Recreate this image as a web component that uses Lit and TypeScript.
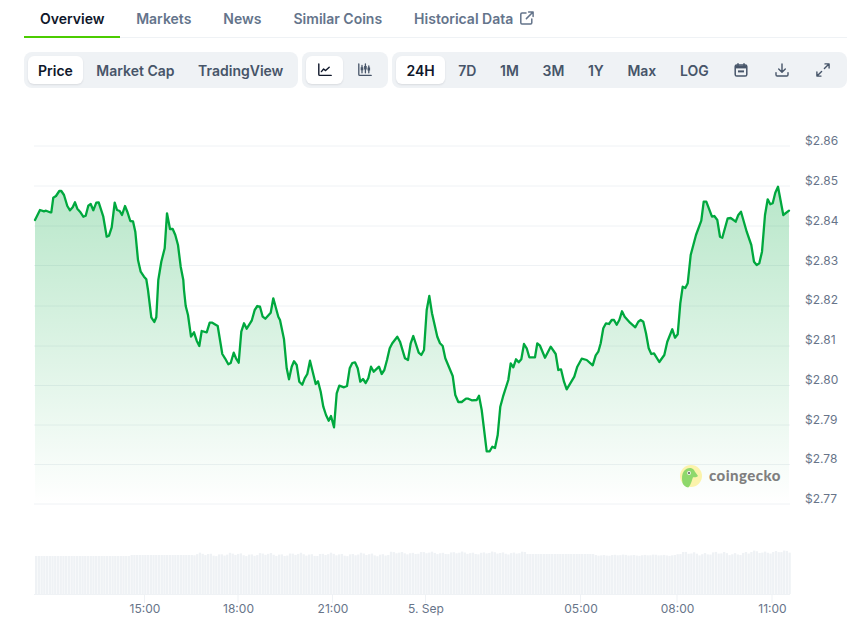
import { LitElement, html, css, svg } from "lit";
import { customElement } from "lit/decorators.js";

const LINE: [number, number][] = [
[35,220],[40,210],[44,211.3],[46,210.7],[50,212.3],[51.3,212.3],[53.3,197.7],[56,196],[59.3,191],[61.3,191],[64,195],[67.3,206],[70,210.3],[72.7,207.3],[75,202.3],[77.3,208.7],[80,211.7],[83.3,216.7],[85.7,215.7],[88.3,205.7],[90.7,204],[93.3,210.3],[96.3,202.7],[98.7,202.3],[103.3,216.7],[106.7,236.7],[109,235.7],[111.7,227.3],[114.7,202.7],[117,210],[119.7,211],[122,215],[125,206],[127.3,211.7],[130.3,221],[133,221.3],[135.3,231.7],[138,260],[140.7,271.7],[144,276.7],[146.3,279.3],[148,290],[151.3,317.3],[154.3,322],[156.3,317.3],[158.3,280],[161.3,261.7],[164.7,248.3],[167,213.3],[170,229],[172.7,229],[175.3,235],[178,245],[180.7,266.7],[183.3,280],[184,290],[185.7,306],[188,315],[191,336.7],[194,332.3],[196.7,340.7],[199.3,346],[201.7,331],[206.7,332.3],[209.7,322.7],[212.3,322.7],[217.7,326],[222.3,354],[225,358.3],[228.3,364.3],[230.7,363],[233.7,352.7],[236,358.3],[238.7,362.7],[241.3,331.7],[244,323.3],[246.7,328.7],[251.7,320.7],[254.7,310],[257.3,306],[260,306.7],[262.7,316.7],[265.3,318.7],[270.7,312.7],[273.3,298.3],[278.3,316.7],[280,320],[284,339.3],[286.7,368.3],[289,379.3],[291.7,366.7],[294,361.3],[296.7,365],[299.3,381.7],[302.3,384.7],[304.7,378.3],[307.3,374],[310,360.7],[315.7,384],[318,381.3],[320.7,391.7],[323.3,406.7],[326,415],[328.7,420.7],[331,416],[334,427.3],[336.7,393.3],[339.3,385.7],[344,387.3],[347,386],[349.7,368.3],[352.3,363],[355,362.3],[357.7,368.3],[360.3,381.7],[363,379],[365.7,383],[368.3,378.3],[371,366.7],[373.7,371.7],[379,366.7],[381.7,374],[384.3,370],[387,360],[389.7,348.3],[392.3,343.3],[397.3,336.7],[400,341.7],[405,358.3],[408,360],[410.7,343.3],[413.3,336],[418.7,352.7],[421.3,355],[424,350],[426.7,310],[429.3,296],[432,313.3],[437.3,336.7],[440,343.3],[442.7,346],[445.3,358.3],[452.7,376],[455.3,395],[458.3,402],[461.7,402],[466,398.7],[468.3,398.7],[471.7,400.3],[476.7,400],[479,395.7],[481.7,410],[486.7,451.3],[489.7,451.3],[492.3,446.7],[495,448],[497.7,435],[500.3,406.7],[503,396.7],[508.3,380],[510.7,363.3],[513.3,367.3],[516,359.3],[518.7,362.3],[521.3,359.3],[524,344],[526.7,348.3],[529.3,357.3],[535,357.3],[537.3,343.3],[540,345.7],[545,357.7],[550.7,346.7],[555.7,354],[558.3,370],[561,369.3],[564,381.7],[566.7,389.3],[574.3,376.7],[577.3,366.7],[581.7,358.7],[586.7,360],[592.7,365.3],[595.7,355.3],[598.3,351.7],[600.7,343.3],[603.3,328.3],[606,323.3],[609,324],[611.7,320],[614,320],[616.7,324.7],[619.3,320],[622,311.3],[624.7,316.7],[630,322.7],[635.3,327.3],[638.3,321.7],[640.7,320],[643.3,321.7],[646,333.3],[648.7,348.3],[651.3,354],[654,353.3],[659.3,362],[664.3,355],[667.3,341.7],[672.3,329.3],[675,337.7],[677.7,334.3],[680.3,303.3],[682.7,286.7],[685.3,288],[687.7,283.3],[690.7,255],[696,235],[701.3,220.7],[703.7,201.7],[706.3,201.7],[712,216.7],[714.3,216],[717.3,220],[720,236.7],[722.3,237.7],[727.7,218.3],[730.7,218],[735.7,221.7],[738.3,215],[741,211.7],[746.7,231.7],[751.3,245],[754,261.7],[756.7,265],[759.3,263.3],[762,251.7],[765,215],[767.7,199.3],[770.3,204.3],[772.7,203.3],[775.3,192.7],[778,186.7],[783.3,215],[789,210.7],
];

const GRID = [146, 186, 226, 265.5, 306, 346, 385.5, 425, 464.5, 504];
const PRICES = ["$2.86","$2.85","$2.84","$2.83","$2.82","$2.81","$2.80","$2.79","$2.78","$2.77"];
const TICKS: [number, string][] = [[145,"15:00"],[238.5,"18:00"],[333,"21:00"],[426,"5. Sep"],[581,"05:00"],[677.5,"08:00"],[772.5,"11:00"]];

// Volume bars: height in px above the axis, as plateaus with a local wobble.
function barHeight(i: number): number {
  const w = Math.sin(i * 1.7) + Math.sin(i * 0.53 + 1) * 0.7;
  if (i < 35) return 38;
  if (i < 58) return 39;
  if (i < 130) return 39.5 + w * 1.1;
  if (i < 180) return 41 + w * 0.9;
  if (i < 205) return 40;
  if (i < 235) return 38.8 + w * 0.4;
  if (i < 262) return 40.5 + w * 1.2;
  return 42 + w;
}
const BARS: number[] = Array.from({ length: 277 }, (_, i) => barHeight(i));

const LINE_D = "M" + LINE.map(([x, y]) => `${x} ${y}`).join("L");
const AREA_D = `${LINE_D}L789 504L35 504Z`;

const ic = {
  external: html`<svg class="ext" viewBox="0 0 14 14" fill="none" stroke="currentColor" stroke-width="1.5" stroke-linecap="round" stroke-linejoin="round"><path d="M6 2H2a1.2 1.2 0 0 0-1.2 1.2v8.6A1.2 1.2 0 0 0 2 13h8.6a1.2 1.2 0 0 0 1.2-1.2V8"/><path d="M8.6 .9h4.5v4.5M13 1 6.4 7.6"/></svg>`,
  line: html`<svg class="ico" viewBox="0 0 14 14" fill="none" stroke="currentColor" stroke-width="1.4" stroke-linecap="round" stroke-linejoin="round"><path d="M.8 1v10.4c0 .6.3 1 1 1h11.4"/><path d="M3.4 8.6 5.6 6l2 1.6 3.6-3.4"/></svg>`,
  candle: html`<svg class="ico" viewBox="0 0 14 14" fill="none" stroke="currentColor" stroke-width="1.3" stroke-linecap="round"><path d="M.8 1v10.4c0 .6.3 1 1 1h11.4"/><path d="M4 2.400v7.4M7.400 1v8.800M10.800 3v6.800"/><path d="M4 4.200v3M7.400 3v3.600M10.800 4.600v3" stroke-width="2.6" stroke-linecap="butt"/></svg>`,
  calendar: html`<svg class="ico" viewBox="0 0 14 14" fill="none"><path d="M4 .8v2M10 .8v2" stroke="currentColor" stroke-width="1.5" stroke-linecap="round"/><rect x="1.200" y="2" width="11.600" height="11" rx="1.600" stroke="currentColor" stroke-width="1.5"/><path d="M1.500 2.600h11v2.800h-11z" fill="currentColor"/><path d="M4 8.400h6" stroke="currentColor" stroke-width="2"/></svg>`,
  download: html`<svg class="ico" viewBox="0 0 14 14" fill="none" stroke="currentColor" stroke-width="1.4" stroke-linecap="round" stroke-linejoin="round"><path d="M7 .9v8M3.700 5.900 7 9.200l3.300-3.300"/><path d="M1 9.600v2.200c0 .7.500 1.200 1.200 1.200h9.600c.7 0 1.200-.5 1.200-1.200V9.600"/></svg>`,
  expand: html`<svg class="ico" viewBox="0 0 14 14" fill="none" stroke="currentColor" stroke-width="1.4" stroke-linecap="round" stroke-linejoin="round"><path d="M9 .9h4.100V5M13 1 8.400 5.600M5 13.100H.9V9M1 13l4.600-4.600"/></svg>`,
};

@customElement("app-root")
export class AppRoot extends LitElement {
  static styles = css`
    :host {
      display: block;
      width: 847px;
      height: 631px;
      overflow: hidden;
      background: #fff;
      font-family: Inter, "Liberation Sans", sans-serif;
      -webkit-font-smoothing: antialiased;
    }
    .tabs {
      display: flex;
      height: 38px;
      box-sizing: border-box;
      margin-left: 24px;
      border-bottom: 1px solid #eff2f5;
    }
    .tab {
      display: flex;
      align-items: center;
      gap: 7px;
      height: 38px;
      box-sizing: border-box;
      padding: 0 16px 1px;
      font-size: 14px;
      font-weight: 600;
      color: #64748b;
    }
    .tab.on {
      color: #0f172a;
      border-bottom: 2px solid #4bcc00;
      padding: 0 15.7px 0 16px;
    }
    .ext { width: 14px; height: 14px; margin-top: -1px; }
    .bar {
      display: flex;
      gap: 4px;
      margin: 14px 0 0 24px;
    }
    .group {
      display: flex;
      gap: 4px;
      padding: 4px;
      height: 36px;
      box-sizing: border-box;
      border-radius: 8px;
      background: #eff2f5;
    }
    .group.first { gap: 3.5px; padding-right: 5px; }
    .group.icons { gap: 3px; padding-right: 5px; }
    .group.grow { flex: 1; gap: 3.6px; }
    .btn {
      display: flex;
      align-items: center;
      justify-content: center;
      padding: 0 10px;
      border-radius: 6px;
      font-size: 14px;
      font-weight: 600;
      color: #475569;
    }
    .btn.on {
      background: #fff;
      color: #0f172a;
      box-shadow: 0 1px 2px rgba(15, 23, 42, 0.1);
    }
    .btn.icon { width: 37px; padding: 0; box-sizing: border-box; }
    .btn.tool { width: 37.5px; padding: 0; box-sizing: border-box; }
    .ico { width: 14px; height: 14px; display: block; }
    .chart { display: block; margin-top: 16px; }
    .y { font-size: 12px; fill: #677489; }
    .x { font-size: 12px; fill: #677489; text-anchor: middle; }
    .brand { font-family: Lato, Inter, sans-serif; font-size: 15px; font-weight: 900; fill: #7f7f7f; letter-spacing: 0.45px; }
  `;

  render() {
    return html`
      <div class="tabs">
        <div class="tab on">Overview</div>
        <div class="tab">Markets</div>
        <div class="tab">News</div>
        <div class="tab">Similar Coins</div>
        <div class="tab">Historical Data ${ic.external}</div>
      </div>
      <div class="bar">
        <div class="group first">
          <div class="btn on">Price</div>
          <div class="btn">Market Cap</div>
          <div class="btn">TradingView</div>
        </div>
        <div class="group icons">
          <div class="btn icon on">${ic.line}</div>
          <div class="btn icon">${ic.candle}</div>
        </div>
        <div class="group grow">
          <div class="btn on">24H</div>
          <div class="btn">7D</div>
          <div class="btn">1M</div>
          <div class="btn">3M</div>
          <div class="btn">1Y</div>
          <div class="btn">Max</div>
          <div class="btn">LOG</div>
          <div class="btn tool">${ic.calendar}</div>
          <div class="btn tool">${ic.download}</div>
          <div class="btn tool">${ic.expand}</div>
        </div>
      </div>
      ${this.chart()}
    `;
  }

  private chart() {
    // The svg starts at y=104 in the page; the viewBox keeps page coordinates.
    return html`<svg class="chart" width="847" height="527" viewBox="0 104 847 527">
      <defs>
        <linearGradient id="fill" gradientUnits="userSpaceOnUse" x1="0" y1="186" x2="0" y2="504">
          <stop offset="0" stop-color="#00a83e" stop-opacity="0.28"/>
          <stop offset="1" stop-color="#00a83e" stop-opacity="0"/>
        </linearGradient>
      </defs>
      ${GRID.map((y) => svg`<line x1="34" x2="790" y1=${y} y2=${y} stroke="#eff2f5" stroke-width="1"/>`)}
      <path d=${AREA_D} fill="url(#fill)"/>
      <path d=${LINE_D} fill="none" stroke="#00a83e" stroke-width="2.3" stroke-linejoin="round" stroke-linecap="round"/>
      ${PRICES.map((p, i) => svg`<text class="y" x="805" y=${145.4 + i * 39.75}>${p}</text>`)}
      ${BARS.map((h, i) => svg`<rect x=${35 + i * 2.73} y=${594 - h} width="2.3" height=${h} fill="#eff2f5"/>`)}
      <line x1="34" x2="790" y1="594.5" y2="594.5" stroke="#eff2f5"/>
      ${TICKS.map(([x]) => svg`<line x1=${x - 0.5} x2=${x - 0.5} y1="595" y2="603" stroke="#eff2f5"/>`)}
      ${TICKS.map(([x, t]) => svg`<text class="x" x=${x} y="612.5">${t}</text>`)}
      <g>
        <circle cx="691" cy="476" r="11" fill="#fbf3ab"/>
        <path d="M682.500 483c-1-5-.6-9.500 1.500-12 2.200-2.600 5.500-3.500 8-2.500 1.500.6 2.200 1.600 2.800 3l3.200 4.500c-.8 1.200-3 1.500-5 1.300-1 2.500-1.300 4.500-2.300 6.500-.8 1.700-1.500 3.200-2.500 3.600-2.600-.2-4.700-1.800-5.700-4.400z" fill="#8ed86c"/>
        <circle cx="689" cy="473" r="1.900" fill="#f4f4ee"/>
        <circle cx="689" cy="473" r="1" fill="#58595b"/>
        <text class="brand" x="709" y="481">coingecko</text>
      </g>
    </svg>`;
  }
}
